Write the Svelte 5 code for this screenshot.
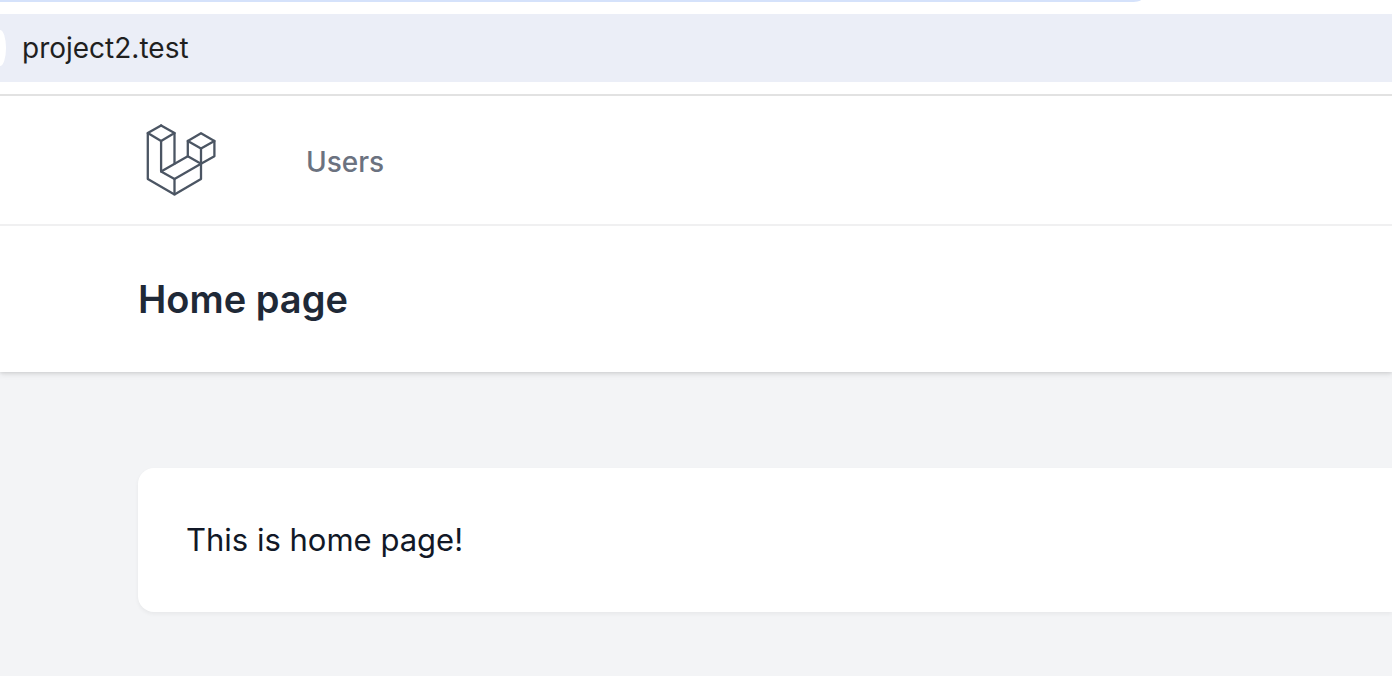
<script>
  const links = [{ label: 'Users', href: '#users' }];
</script>

<div class="window">
  <div class="browser">
    <div class="tab"></div>
    <div class="address">
      <span class="knob"></span>
      <span class="url">project2.test</span>
    </div>
  </div>

  <nav>
    <a class="logo" href="#home" aria-label="Home">
      <svg viewBox="0 0 72 72" fill="none" stroke="#4b5563" stroke-width="2.3" stroke-linejoin="round" stroke-linecap="round">
        <path d="M15.1 1.4 L1.8 9.1 V54.9 L28.5 70.4 L55 54.9 V24.6" />
        <path d="M1.8 9.1 L15.1 16.9 L28.5 9.1 L15.1 1.4" />
        <path d="M28.5 9.1 V39.8" />
        <path d="M15.1 16.9 V47.4 L28.5 54.9 V70.4" />
        <path d="M15.1 47.4 L41.8 32.2 L55 39.8 L28.5 54.9" />
        <path d="M41.8 32.2 V16.9 L55 9.2 L68.4 16.9 V32.2 L55 39.8" />
        <path d="M41.8 16.9 L55 24.6 L68.4 16.9" />
      </svg>
    </a>
    {#each links as link}
      <a class="link" href={link.href}>{link.label}</a>
    {/each}
  </nav>

  <header>
    <h1>Home page</h1>
  </header>

  <main>
    <section class="card">
      <p>This is home page!</p>
    </section>
  </main>
</div>

<style>
  :global(body) {
    background: #f3f4f6;
    overflow-x: hidden;
  }
  .window {
    font-family: Inter, "Liberation Sans", sans-serif;
    color: #111827;
  }
  .browser {
    background: #fff;
    border-bottom: 2px solid #e2e2e2;
    padding-bottom: 12px;
  }
  .tab {
    height: 2px;
    width: 82%;
    background: #d5e2fb;
    border-bottom-right-radius: 12px 2px;
    margin-bottom: 12px;
  }
  .address {
    display: flex;
    align-items: center;
    height: 68px;
    background: #ebeef7;
    color: #1f1f1f;
  }
  .knob {
    width: 6px;
    height: 36px;
    background: #fff;
    border-radius: 0 6px 6px 0 / 0 18px 18px 0;
  }
  .url {
    margin-left: 16px;
    font-size: 28px;
    line-height: 40px;
  }
  nav {
    position: relative;
    z-index: 1;
    display: flex;
    align-items: center;
    height: 128px;
    padding-left: 146px;
    background: #fff;
    border-bottom: 2px solid #f0f0f1;
  }
  .logo {
    display: flex;
  }
  svg {
    width: 72px;
    height: 72px;
  }
  .link {
    margin-left: 88px;
    padding-top: 4px;
    font-size: 28px;
    line-height: 40px;
    font-weight: 500;
    color: #6b7280;
    text-decoration: none;
  }
  header {
    padding: 48px 0 48px 138px;
    background: #fff;
    box-shadow: 0 2px 6px rgba(0, 0, 0, 0.1), 0 1px 3px rgba(0, 0, 0, 0.08);
  }
  h1 {
    margin: 0;
    font-size: 38px;
    line-height: 50px;
    font-weight: 600;
    color: #1f2937;
  }
  main {
    padding: 96px 0 64px 138px;
  }
  .card {
    padding: 48px;
    background: #fff;
    border-radius: 16px 0 0 16px;
    box-shadow: 0 2px 4px rgba(0, 0, 0, 0.05);
  }
  p {
    margin: 0;
    font-size: 31px;
    line-height: 48px;
  }
</style>
